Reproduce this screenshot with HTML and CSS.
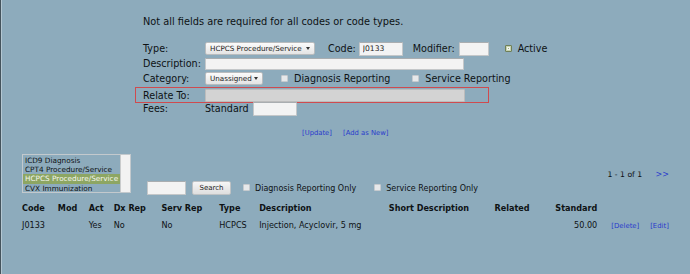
FILE: index.html
```html
<!DOCTYPE html>
<html lang="en">
<head>
<meta charset="UTF-8">
<title>Codes</title>
<link rel="stylesheet" href="styles.css">
</head>
<body>
<div class="page">
  <p class="note">Not all fields are required for all codes or code types.</p>

  <div class="form">
    <div class="row">
      <span class="label">Type:</span>
      <span class="select type-select">HCPCS Procedure/Service<i class="caret"></i></span>
      <span class="code-label">Code:</span>
      <input class="field code-field" type="text" value="J0133">
      <span class="mod-label">Modifier:</span>
      <input class="field mod-field" type="text">
      <span class="cb checked active-cb"></span>
      <span class="cb-text">Active</span>
    </div>
    <div class="row">
      <span class="label">Description:</span>
      <input class="field desc-field" type="text">
    </div>
    <div class="row">
      <span class="label">Category:</span>
      <span class="select cat-select">Unassigned<i class="caret"></i></span>
      <span class="cb cat-cb"></span>
      <span class="cb-text">Diagnosis Reporting</span>
      <span class="cb serv-cb"></span>
      <span class="cb-text">Service Reporting</span>
    </div>
    <div class="row relate">
      <span class="label">Relate To:</span>
      <input class="field relate-field" type="text" readonly>
    </div>
    <div class="row fees">
      <span class="label">Fees:</span>
      <span>Standard</span>
      <input class="field fee-field" type="text">
    </div>
    <div class="actions">
      <a href="#">[Update]</a>
      <a href="#">[Add as New]</a>
    </div>
  </div>

  <div class="lower">
    <div class="listbox">
      <ul>
        <li>ICD9 Diagnosis</li>
        <li>CPT4 Procedure/Service</li>
        <li class="selected">HCPCS Procedure/Service</li>
        <li>CVX Immunization</li>
      </ul>
      <div class="scroll"></div>
    </div>
    <div class="search">
      <input class="field search-field" type="text">
      <button class="btn" type="button">Search</button>
      <span class="cb search-cb"></span>
      <span class="cb-text">Diagnosis Reporting Only</span>
      <span class="cb search-cb2"></span>
      <span class="cb-text">Service Reporting Only</span>
    </div>
    <div class="pager">
      <span>1 - 1 of 1</span>
      <a href="#">&gt;&gt;</a>
    </div>
  </div>

  <table class="codes">
    <colgroup>
      <col style="width:36px"><col style="width:31px"><col style="width:25px"><col style="width:48px">
      <col style="width:58px"><col style="width:40px"><col style="width:130px"><col style="width:106px">
      <col style="width:60px"><col style="width:43px"><col style="width:53px"><col style="width:40px">
    </colgroup>
    <tr>
      <th>Code</th><th>Mod</th><th>Act</th><th>Dx Rep</th><th>Serv Rep</th><th>Type</th>
      <th>Description</th><th>Short Description</th><th>Related</th><th class="num">Standard</th><th></th><th></th>
    </tr>
    <tr>
      <td>J0133</td><td></td><td>Yes</td><td>No</td><td>No</td><td>HCPCS</td>
      <td>Injection, Acyclovir, 5 mg</td><td></td><td></td><td class="num">50.00</td>
      <td class="act"><a href="#">[Delete]</a></td><td><a href="#">[Edit]</a></td>
    </tr>
  </table>
</div>
</body>
</html>
```

FILE: styles.css
```css
body {
  margin: 0;
  padding: 0;
  background-color: #8dabbc;
  font-family: "DejaVu Sans", Verdana, sans-serif;
  color: #0e1214;
}
a {
  color: #2a3bcc;
  text-decoration: none;
}
.page {
  min-height: 274px;
  box-sizing: border-box;
  border-left: 1px solid #44535c;
  box-shadow: inset 1px 0 #b4c7d2;
}
.note {
  margin: 0;
  padding: 16px 0 0 142px;
  font-size: 9.8px;
  line-height: 12px;
}
.form {
  margin-top: 13px;
  padding-left: 142px;
  font-size: 9.6px;
}
.row {
  display: flex;
  align-items: center;
  height: 15px;
  white-space: nowrap;
}
.label {
  width: 62px;
  flex: none;
}
.field {
  box-sizing: border-box;
  height: 14px;
  margin: 0;
  padding: 0 3px;
  border: 1px solid #c4c7c9;
  border-top-color: #a9adb0;
  border-radius: 1px;
  background: #f3f3f3;
  font-family: "DejaVu Sans", sans-serif;
  font-size: 7.6px;
  color: #222;
}
.select {
  position: relative;
  box-sizing: border-box;
  height: 13px;
  line-height: 11px;
  padding-left: 4px;
  border: 1px solid #b9bcbe;
  border-radius: 2px;
  background: linear-gradient(#fbfbfb, #e4e4e4);
  font-size: 7.2px;
  color: #222;
}
.caret {
  position: absolute;
  right: 4px;
  top: 4px;
  border-left: 2.5px solid transparent;
  border-right: 2.5px solid transparent;
  border-top: 3px solid #333;
}
.type-select { width: 110px; }
.cat-select { width: 58px; }
.code-label { margin-left: 13px; }
.code-field { margin-left: 3px; width: 44px; }
.mod-label { margin-left: 10px; }
.mod-field { margin-left: 4px; width: 30px; }
.desc-field { width: 259px; height: 12px; }
.cb {
  flex: none;
  box-sizing: border-box;
  width: 7px;
  height: 7px;
  border: 1px solid #c6cace;
  border-radius: 1px;
  background: #e6e8ea;
}
.cb.checked {
  border-color: #6f7f58;
  background: #9fb283;
  box-shadow: inset 0 0 0 1px #c4d1ae, inset 0 0 0 2px #f0f3ea;
}
.cb-text { margin-left: 6px; }
.active-cb { margin-left: 16px; }
.cat-cb { margin-left: 18px; }
.serv-cb { margin-left: 22px; }
.relate {
  box-sizing: border-box;
  margin: 1px 0 0 -8px;
  height: 16px;
  width: 354px;
  padding-left: 7px;
  border: 1px solid #cf4b4f;
}
.relate-field {
  width: 260px;
  height: 13px;
  background: #d3d3d3;
  border-color: #bcbcbc;
}
.fees { margin-top: -2px; }
.fee-field { margin-left: 4px; width: 44px; }
.actions {
  margin: 11px 0 0 159px;
  height: 12px;
  line-height: 12px;
  font-size: 6.8px;
}
.actions a + a { margin-left: 9px; }
.lower {
  display: flex;
  align-items: flex-start;
  margin-top: 15px;
  padding: 0 21px;
  font-size: 8px;
  white-space: nowrap;
}
.listbox {
  display: flex;
  box-sizing: border-box;
  width: 109px;
  height: 39px;
  border: 1px solid #c3c9cd;
  font-size: 7.3px;
}
.listbox ul {
  flex: 1;
  margin: 0;
  padding: 1px 0 0;
  list-style: none;
}
.listbox li {
  height: 9.2px;
  line-height: 9.2px;
  padding-left: 2px;
}
.listbox li.selected {
  background: #8da663;
  color: #f4f6ee;
}
.scroll {
  width: 9px;
  background: #f2f2f2;
  border-left: 1px solid #c9cbcc;
}
.search {
  display: flex;
  align-items: center;
  margin: 27px 0 0 16px;
}
.search-field { width: 39px; }
.btn {
  box-sizing: border-box;
  width: 39px;
  height: 14px;
  margin-left: 6px;
  padding: 0;
  border: 1px solid #bfc2c4;
  border-radius: 2px;
  background: linear-gradient(#f6f6f6, #dedede);
  font-family: "DejaVu Sans", sans-serif;
  font-size: 7px;
  color: #222;
}
.search-cb { margin: -1px 0 0 12px; }
.search-cb2 { margin: -1px 0 0 18px; }
.search .cb-text { margin-left: 5px; }
.pager {
  margin: 15px 0 0 auto;
  line-height: 12px;
  font-size: 7.7px;
}
.pager a { margin-left: 11px; font-size: 8px; }
.codes {
  margin: 5px 0 0 21px;
  table-layout: fixed;
  border-collapse: collapse;
  font-size: 8.1px;
}
.codes th, .codes td {
  height: 16.5px;
  padding: 0;
  text-align: left;
  white-space: nowrap;
}
.codes th { font-weight: bold; }
.codes .num { text-align: right; }
.codes .act { padding-left: 14px; }
.codes td a { font-size: 6.9px; }
```
